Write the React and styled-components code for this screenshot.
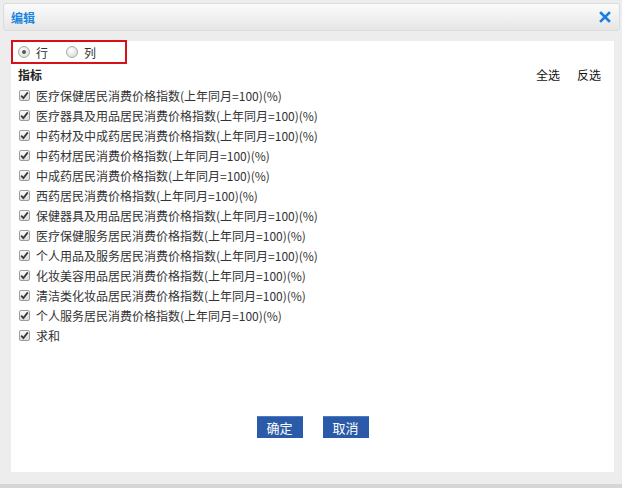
import React from 'react';
import styled, { createGlobalStyle } from 'styled-components';

const Global = createGlobalStyle`
  html, body {
    margin: 0;
    padding: 0;
    background: #ededed;
  }
  body {
    font-family: "Noto Sans CJK SC", "Liberation Sans", sans-serif;
    font-size: 12px;
    color: #333;
  }
`;

const Dialog = styled.div`
  width: 622px;
  height: 488px;
  box-sizing: border-box;
  padding: 3px 2px 0 3px;
  display: flex;
  flex-direction: column;
  background: #ededed;
  position: relative;
`;

const Header = styled.div`
  height: 28px;
  box-sizing: border-box;
  border: 1px solid #dcdcdc;
  border-radius: 3px;
  background: linear-gradient(#fbfbfb, #e6e6e6);
  display: flex;
  align-items: center;
  justify-content: space-between;
  padding: 0 8px 0 7px;
`;

const Title = styled.span`
  color: #1a86e0;
  font-weight: bold;
  font-size: 12px;
`;

const Close = styled.svg`
  width: 12px;
  height: 12px;
  cursor: pointer;
`;

const Panel = styled.div`
  margin: 10px 6px 0 8px;
  height: 431px;
  background: #fff;
  display: flex;
  flex-direction: column;
`;

const ModeBox = styled.div`
  width: 116px;
  height: 24px;
  box-sizing: border-box;
  border: 2px solid #d8101a;
  margin-top: -1px;
  display: flex;
  align-items: center;
  padding-left: 5px;
  gap: 6px;
`;

const RadioLabel = styled.label`
  display: flex;
  align-items: center;
  gap: 6px;
  margin-right: 12px;
`;

const RadioDot = styled.span`
  width: 12px;
  height: 12px;
  box-sizing: border-box;
  border-radius: 50%;
  border: 1px solid #a9a9a9;
  background: radial-gradient(circle at 40% 35%, #ffffff, #d4d4d4);
  display: flex;
  align-items: center;
  justify-content: center;
  &::after {
    content: '';
    width: 4px;
    height: 4px;
    border-radius: 50%;
    background: ${p => (p.$on ? '#555' : 'transparent')};
  }
`;

const HeadRow = styled.div`
  display: flex;
  justify-content: space-between;
  align-items: center;
  height: 20px;
  padding: 0 13px 0 7px;
`;

const HeadTitle = styled.span`
  font-weight: bold;
  color: #222;
`;

const Links = styled.div`
  display: flex;
  gap: 17px;
  color: #111;
`;

const List = styled.div`
  display: flex;
  flex-direction: column;
  padding: 0 0 0 8px;
  margin-top: 1px;
`;

const Row = styled.label`
  height: 20px;
  display: flex;
  align-items: center;
  gap: 6px;
  color: #333;
`;

const Box = styled.span`
  width: 11px;
  height: 11px;
  box-sizing: border-box;
  border: 1px solid #9c9c9c;
  border-radius: 2px;
  background: linear-gradient(#fafafa, #dcdcdc);
  display: flex;
  align-items: center;
  justify-content: center;
`;

const Buttons = styled.div`
  margin-top: auto;
  margin-bottom: 34px;
  display: flex;
  justify-content: center;
  gap: 20px;
`;

const Button = styled.button`
  width: 46px;
  height: 22px;
  border: none;
  border-top: 1px solid #4a7cc8;
  background: #2b5ba8;
  color: #fff;
  font-family: "Noto Sans CJK SC", sans-serif;
  font-size: 13px;
  padding: 0;
  cursor: pointer;
`;

const Bottom = styled.div`
  position: absolute;
  left: 0;
  right: 0;
  bottom: 0;
  height: 4px;
  background: #d6d6d6;
`;

const items = [
  '医疗保健居民消费价格指数(上年同月=100)(%)',
  '医疗器具及用品居民消费价格指数(上年同月=100)(%)',
  '中药材及中成药居民消费价格指数(上年同月=100)(%)',
  '中药材居民消费价格指数(上年同月=100)(%)',
  '中成药居民消费价格指数(上年同月=100)(%)',
  '西药居民消费价格指数(上年同月=100)(%)',
  '保健器具及用品居民消费价格指数(上年同月=100)(%)',
  '医疗保健服务居民消费价格指数(上年同月=100)(%)',
  '个人用品及服务居民消费价格指数(上年同月=100)(%)',
  '化妆美容用品居民消费价格指数(上年同月=100)(%)',
  '清洁类化妆品居民消费价格指数(上年同月=100)(%)',
  '个人服务居民消费价格指数(上年同月=100)(%)',
  '求和',
];

const Check = () => (
  <svg width="9" height="9" viewBox="0 0 9 9">
    <path d="M1.2 4.6 L3.4 7 L7.8 1.4" fill="none" stroke="#3a3a3a" strokeWidth="1.8" />
  </svg>
);

export default function App() {
  return (
    <>
      <Global />
      <Dialog>
        <Header>
          <Title>编辑</Title>
          <Close viewBox="0 0 12 12">
            <path d="M2 2 L10 10 M10 2 L2 10" stroke="#1a7fdc" strokeWidth="2.6" strokeLinecap="square" />
          </Close>
        </Header>
        <Panel>
          <ModeBox>
            <RadioLabel>
              <RadioDot $on />
              行
            </RadioLabel>
            <RadioLabel>
              <RadioDot />
              列
            </RadioLabel>
          </ModeBox>
          <HeadRow>
            <HeadTitle>指标</HeadTitle>
            <Links>
              <span>全选</span>
              <span>反选</span>
            </Links>
          </HeadRow>
          <List>
            {items.map(t => (
              <Row key={t}>
                <Box>
                  <Check />
                </Box>
                {t}
              </Row>
            ))}
          </List>
          <Buttons>
            <Button>确定</Button>
            <Button>取消</Button>
          </Buttons>
        </Panel>
        <Bottom />
      </Dialog>
    </>
  );
}
